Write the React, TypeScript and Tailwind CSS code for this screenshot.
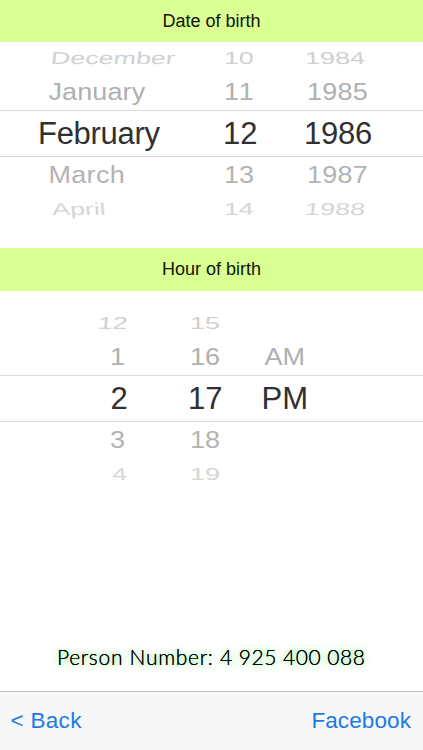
import React from 'react';
import clsx from 'clsx';

type Tilt = 'left' | 'right' | 'none';

interface WheelItem {
  label: string;
  // left padding inside the column plus any tracking tweak
  className: string;
  tilt?: Tilt;
}

interface WheelColumn {
  width: string;
  items: (WheelItem | null)[];
}

const rowStyles = [
  'h-8 text-[27px] text-[#d0d0d0]',
  'h-9 text-[27px] text-[#b0b0b0]',
  'h-[45px] text-[31px] text-[#303030]',
  'h-9 text-[27px] text-[#b3b3b3]',
  'h-8 text-[27px] text-[#d6d6d6]',
];

const rowScale = ['scale-y-[0.64]', 'scale-y-[0.92]', 'scale-y-100', 'scale-y-[0.92]', 'scale-y-[0.64]'];

const tilts: Record<Tilt, string> = {
  left: 'skew-x-[3deg]',
  right: '-skew-x-[4deg]',
  none: '',
};

const dateColumns: WheelColumn[] = [
  {
    width: 'w-[200px]',
    items: [
      { label: 'December', className: 'pl-[51px] tracking-[-0.1px]', tilt: 'right' },
      { label: 'January', className: 'pl-[48.5px] tracking-[0.1px]' },
      { label: 'February', className: 'pl-[38px] tracking-[-0.3px]' },
      { label: 'March', className: 'pl-[48.5px] tracking-[0.3px]' },
      { label: 'April', className: 'pl-[52px] tracking-[-0.1px]', tilt: 'left' },
    ],
  },
  {
    width: 'w-[85px]',
    items: [
      { label: '10', className: 'pl-[24px] tracking-[-0.3px]' },
      { label: '11', className: 'pl-[24px] tracking-[-0.3px]' },
      { label: '12', className: 'pl-[23px]' },
      { label: '13', className: 'pl-[24px]' },
      { label: '14', className: 'pl-[24px] tracking-[-0.3px]' },
    ],
  },
  {
    width: 'w-[138px]',
    items: [
      { label: '1984', className: 'pl-[20px]', tilt: 'left' },
      { label: '1985', className: 'pl-[22px] tracking-[0.2px]' },
      { label: '1986', className: 'pl-[19px] tracking-[-0.2px]' },
      { label: '1987', className: 'pl-[22px] tracking-[0.2px]' },
      { label: '1988', className: 'pl-[20px]', tilt: 'right' },
    ],
  },
];

const hourColumns: WheelColumn[] = [
  {
    width: 'w-[165px]',
    items: [
      { label: '12', className: 'pl-[98px] tracking-[-0.5px]', tilt: 'right' },
      { label: '1', className: 'pl-[110px]' },
      { label: '2', className: 'pl-[110.5px]' },
      { label: '3', className: 'pl-[110px]' },
      { label: '4', className: 'pl-[112px]', tilt: 'left' },
    ],
  },
  {
    width: 'w-[80px]',
    items: [
      { label: '15', className: 'pl-[25px]' },
      { label: '16', className: 'pl-[25px]' },
      { label: '17', className: 'pl-[23px]' },
      { label: '18', className: 'pl-[25px]' },
      { label: '19', className: 'pl-[25px]' },
    ],
  },
  {
    width: 'w-[178px]',
    items: [
      null,
      { label: 'AM', className: 'pl-[19.5px]' },
      { label: 'PM', className: 'pl-[16.5px]' },
      null,
      null,
    ],
  },
];

const SectionHeader: React.FC<{ title: string; className?: string }> = ({ title, className }) => (
  <h2 className={clsx('shrink-0 bg-[#daff93] text-center text-[18px] leading-[43px] text-[#10150a]', className)}>
    {title}
  </h2>
);

const WheelPicker: React.FC<{ columns: WheelColumn[]; className?: string }> = ({ columns, className }) => (
  <div className={clsx('shrink-0 overflow-hidden [font-kerning:none]', className)}>
    {rowStyles.map((rowStyle, row) => (
      <div
        key={row}
        className={clsx('box-content flex items-center', rowStyle, row === 2 && 'border-y border-[#d9d9d9]')}
      >
        {columns.map((column, index) => {
          const item = column.items[row];
          return (
            <div key={index} className={clsx('shrink-0 whitespace-nowrap', column.width)}>
              {item && (
                <div className={clsx('leading-8', item.className)}>
                  <span className={clsx('inline-block align-top', rowScale[row], tilts[item.tilt ?? 'none'])}>
                    {item.label}
                  </span>
                </div>
              )}
            </div>
          );
        })}
      </div>
    ))}
  </div>
);

export default function App() {
  return (
    <div className="flex h-[750px] w-[423px] flex-col overflow-hidden bg-white font-['Liberation_Sans',Arial,sans-serif]">
      <SectionHeader title="Date of birth" className="h-[42px]" />
      <WheelPicker columns={dateColumns} className="h-[206px]" />
      <SectionHeader title="Hour of birth" className="h-[42.5px]" />
      <WheelPicker columns={hourColumns} className="h-[219.5px] pt-[16.5px]" />

      <div className="flex flex-1 items-end pb-[18px]">
        <p className="pl-[57px] font-['Lato',sans-serif] text-[21px] leading-8 font-light tracking-[0.7px] whitespace-nowrap text-black [text-shadow:0_0_0.6px_#000,0_0_6px_#7be87b,0_0_10px_#b8f5b8]">
          Person Number: <span className="tracking-[0.5px]">4 925 400 088</span>
        </p>
      </div>

      <footer className="flex h-[59px] shrink-0 items-center justify-between border-t border-[#bfc3c1] bg-[#f7f7f7] pr-[12px] pl-[10.5px] text-[22.5px] text-[#1b7be6]">
        <button type="button" className="tracking-[0.3px]">&lt; Back</button>
        <button type="button" className="tracking-[0.1px]">Facebook</button>
      </footer>
    </div>
  );
}
